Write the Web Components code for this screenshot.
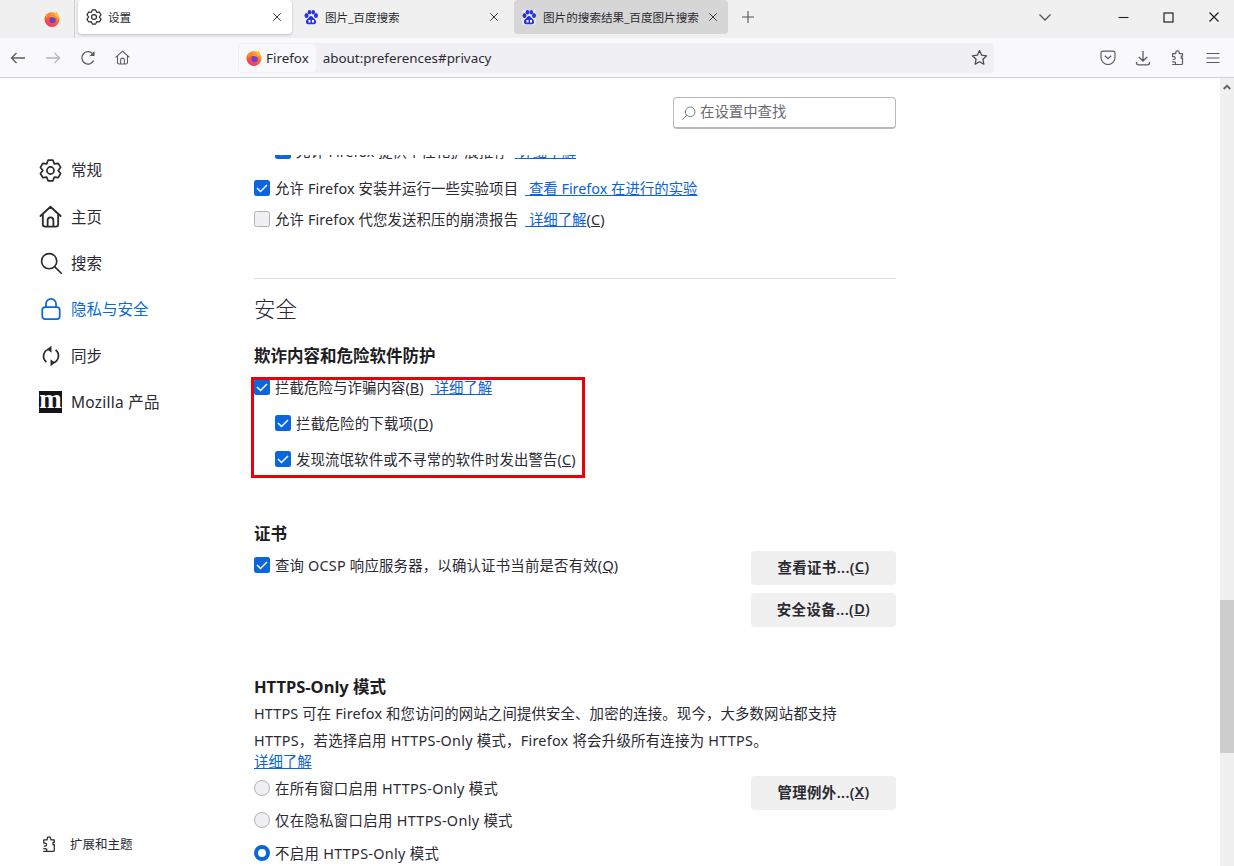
<!DOCTYPE html>
<html lang="zh-CN">
<head>
<meta charset="utf-8">
<title>设置</title>
<style>
    html, body { margin: 0; height: 100%; overflow: hidden; background: #fff; }
    body { font-family: "Noto Sans", "Noto Sans CJK SC", sans-serif; color: #2a2a2e; }
</style>
</head>
<body>
<fx-window></fx-window>
<script>
const FONT = '"Noto Sans", "Noto Sans CJK SC", sans-serif';

function gearPath(cx, cy, outer, inner) {
    let pts = [];
    for (let k = 0; k < 6; k++) {
        const a = -90 + k * 60;
        [[a - 13, outer], [a + 13, outer], [a + 30, inner]].forEach(([d, r]) => {
            const t = d * Math.PI / 180;
            pts.push((cx + r * Math.cos(t)).toFixed(2) + ' ' + (cy + r * Math.sin(t)).toFixed(2));
        });
    }
    return 'M' + pts.join('L') + 'Z';
}

const ICONS = {
    gear: (s, w) => `<svg width="${s}" height="${s}" viewBox="0 0 24 24" fill="none" stroke="currentColor" stroke-width="${w}" stroke-linejoin="round"><path d="${gearPath(12, 12, 11, 8)}"/><circle cx="12" cy="12" r="3.7"/></svg>`,
    home: (s, w) => `<svg width="${s}" height="${s}" viewBox="0 0 24 24" fill="none" stroke="currentColor" stroke-width="${w}" stroke-linejoin="round" stroke-linecap="round"><path d="M1.5 11.5 12 1.8l10.5 9.7M4 9.5V20a2.5 2.5 0 0 0 2.5 2.5h11A2.5 2.5 0 0 0 20 20V9.5M9 22.5V16a3 3 0 0 1 6 0v6.5"/></svg>`,
    search: (s, w) => `<svg width="${s}" height="${s}" viewBox="0 0 24 24" fill="none" stroke="currentColor" stroke-width="${w}" stroke-linecap="round"><circle cx="10" cy="10" r="8.3"/><path d="m16.2 16.2 7 7"/></svg>`,
    lock: (s, w) => `<svg width="${s}" height="${s}" viewBox="0 0 24 24" fill="none" stroke="currentColor" stroke-width="${w}" stroke-linejoin="round"><rect x="2.5" y="10" width="19" height="13" rx="3"/><path d="M6.5 10V6.5a5.5 5.5 0 0 1 11 0V10"/></svg>`,
    sync: (s, w) => `<svg width="${s}" height="${s}" viewBox="0 0 24 24" fill="none" stroke="currentColor" stroke-width="${w}"><path d="M9.5 4.6A8 8 0 0 0 7 18.6M14.5 19.4A8 8 0 0 0 17 5.4"/><path d="M12.5 0.8v7.6L7.6 4.6zM11.5 23.2v-7.6l4.9 3.8z" fill="currentColor" stroke="none"/></svg>`,
    puzzle: (s, w) => `<svg width="${s}" height="${s}" viewBox="0 0 16 16" fill="none" stroke="currentColor" stroke-width="${w}" stroke-linejoin="round"><path d="M2.2 14.5h9.3a1 1 0 0 0 1-1V8.2h-1.2V6.1h1.2V3.6H9.2V2.5a1.7 1.7 0 0 0-3.4 0v1.1H2.6v3h1.2a1.4 1.4 0 0 1 0 2.9H2.6M2.2 11.8h2a1.3 1.3 0 0 1 0 2.7h-2"/></svg>`,
    close: (s) => `<svg width="${s}" height="${s}" viewBox="0 0 12 12" fill="none" stroke="currentColor" stroke-width="1.2"><path d="m1.5 1.5 9 9M10.5 1.5l-9 9"/></svg>`
};

const FIREFOX = `<svg width="16" height="16" viewBox="0 0 32 32">
    <defs><linearGradient id="ff" x1="0.8" y1="0" x2="0.2" y2="1"><stop offset="0" stop-color="#ffc933"/><stop offset="0.45" stop-color="#ff6a2e"/><stop offset="1" stop-color="#ea2f6e"/></linearGradient></defs>
    <circle cx="16" cy="17" r="15" fill="url(#ff)"/>
    <path d="M24 1c3 3 6 8 6 13l-8-4z" fill="#ffbd33"/>
    <path d="M3 9c3-2 5-2 7-1l-5 7z" fill="#ff980e"/>
    <circle cx="17" cy="18" r="6.4" fill="#6d3fd0"/>
    <path d="M10 12c4-4 11-3 13 3-3-2-9-4-13-3z" fill="#ff9a2e"/>
</svg>`;

const BAIDU = `<svg width="14" height="15" viewBox="0 0 28 30" fill="#2932e1">
    <ellipse cx="5" cy="11" rx="4" ry="5"/><ellipse cx="11" cy="4.5" rx="3.6" ry="4.5"/><ellipse cx="18.5" cy="4.5" rx="3.6" ry="4.5"/><ellipse cx="24" cy="11" rx="4" ry="5"/>
    <path d="M14 12c-3 0-4 3-6 5-2.500 2-5 4-4 8 1 4 5 4 10 3.500 5 .5 9 .5 10-3.500 1-4-1.500-6-4-8-2-2-3-5-6-5z"/>
    <rect x="9" y="20" width="4" height="5" fill="#fff"/><rect x="16" y="20" width="4" height="5" fill="#fff"/>
</svg>`;

function component(name, markup) {
    const tpl = document.createElement('template');
    tpl.innerHTML = markup;
    customElements.define(name, class extends HTMLElement {
        connectedCallback() {
            if (this.shadowRoot) return;
            this.attachShadow({ mode: 'open' }).appendChild(tpl.content.cloneNode(true));
        }
    });
}

component('fx-tab', `
    <style>
        :host { display: flex; align-items: center; width: 214px; height: 34px; box-sizing: border-box; padding: 0 10px 0 8px; border-radius: 4px; font-size: 11.600px; color: #2b2a33; }
        :host([current]) { background: #fff; box-shadow: 0 1px 3px rgba(0,0,0,.22); }
        :host([loaded]) { background: #d6d6d6; }
        .icon { display: flex; margin-right: 6px; }
        .label { flex: 1; white-space: nowrap; overflow: hidden; }
        .close { display: flex; color: #3a3a40; }
    </style>
    <span class="icon"><slot name="icon"></slot></span>
    <span class="label"><slot></slot></span>
    <span class="close">${ICONS.close(10)}</span>`);

component('fx-tabstrip', `
    <style>
        :host { display: flex; align-items: flex-start; height: 38px; background: #f0f0f0; color: #3a3a40; }
        .app { display: flex; justify-content: center; align-items: center; width: 75px; height: 38px; padding-left: 29px; box-sizing: border-box; border-right: 1px solid #d0d0d0; }
        .tabs { display: flex; margin-left: 3px; }
        .gap { width: 7px; }
        .tight { width: 1px; }
        .plus { display: flex; margin: 10px 0 0 13px; color: #55555a; }
        .chev { display: flex; margin: 13px 0 0 283px; color: #55555a; }
        .win { display: flex; margin-left: auto; margin-right: -2px; }
        .win span { display: flex; justify-content: center; align-items: center; width: 45px; height: 34px; color: #222; }
    </style>
    <span class="app">${FIREFOX}</span>
    <div class="tabs">
        <fx-tab current><span slot="icon" style="display:flex">${ICONS.gear(16, 1.8)}</span>设置</fx-tab>
        <span class="tight"></span>
        <fx-tab style="padding:0 8px 0 11px"><span slot="icon" style="display:flex;margin-right:1px">${BAIDU}</span>图片_百度搜索</fx-tab>
        <span class="gap"></span>
        <fx-tab loaded><span slot="icon" style="display:flex;background:#e8e8f4;border-radius:2px;margin-right:1px">${BAIDU}</span>图片的搜索结果_百度图片搜索</fx-tab>
    </div>
    <span class="plus"><svg width="14" height="14" viewBox="0 0 14 14" stroke="currentColor" stroke-width="1.1"><path d="M7 1v12M1 7h12"/></svg></span>
    <span class="chev"><svg width="14" height="9" viewBox="0 0 14 9" fill="none" stroke="currentColor" stroke-width="1.300"><path d="m1.500 1.500 5.500 5.500 5.500-5.500"/></svg></span>
    <div class="win">
        <span><svg width="11" height="11" viewBox="0 0 11 11" stroke="currentColor" stroke-width="1.100"><path d="M0.500 5.500h10"/></svg></span>
        <span><svg width="11" height="11" viewBox="0 0 11 11" fill="none" stroke="currentColor" stroke-width="1.200"><rect x="1" y="1" width="9" height="9"/></svg></span>
        <span>${ICONS.close(12)}</span>
    </div>`);

component('fx-toolbar', `
    <style>
        :host { display: flex; align-items: center; height: 40px; box-sizing: border-box; background: #f9f9fb; border-bottom: 1px solid #cfcfd8; color: #5b5b66; font-size: 13.400px; }
        .nav { display: flex; justify-content: center; align-items: center; width: 35px; height: 30px; flex: none; }
        .nav.off { color: #b5b5bb; }
        .url { display: flex; align-items: center; height: 30px; width: 756px; margin-left: 99px; border-radius: 4px; background: #f0f0f4; color: #2b2a33; }
        .chip { display: flex; align-items: center; gap: 4px; height: 28px; padding: 0 7px; margin-left: 1px; background: #f9f9fb; border-radius: 4px; }
        .addr { flex: 1; margin-left: 7px; }
        .star { display: flex; margin-right: 6px; color: #4a4a52; }
        .right { display: flex; margin-left: 96px; }
        .right span { display: flex; justify-content: center; align-items: center; width: 35px; height: 30px; }
    </style>
    <span class="nav"><svg width="16" height="12" viewBox="0 0 16 12" fill="none" stroke="currentColor" stroke-width="1.300"><path d="M15 6H1.500M6.500 1 1.500 6l5 5"/></svg></span>
    <span class="nav off"><svg width="16" height="12" viewBox="0 0 16 12" fill="none" stroke="currentColor" stroke-width="1.300"><path d="M1 6h13.500M9.500 1l5 5-5 5"/></svg></span>
    <span class="nav"><svg width="16" height="16" viewBox="0 0 16 16" fill="none" stroke="currentColor" stroke-width="1.300"><path d="M13.700 10.500A6.200 6.200 0 1 1 12.500 3.500L14 5"/><path d="M14.500 1v5h-5z" fill="currentColor" stroke="none"/></svg></span>
    <span class="nav" style="width:34px">${ICONS.home(15, 1.700)}</span>
    <div class="url">
        <span class="chip">${FIREFOX}Firefox</span>
        <span class="addr">about:preferences#privacy</span>
        <span class="star"><svg width="17" height="17" viewBox="0 0 16 16" fill="none" stroke="currentColor" stroke-width="1.200" stroke-linejoin="round"><path d="m8 1.500 2 4.300 4.700.6-3.500 3.200.9 4.700L8 12l-4.100 2.300.9-4.700L1.300 6.400 6 5.800z"/></svg></span>
    </div>
    <div class="right">
        <span><svg width="16" height="15" viewBox="0 0 16 15" fill="none" stroke="currentColor" stroke-width="1.200"><path d="M1 3a1.800 1.800 0 0 1 1.800-1.800h10.400A1.800 1.800 0 0 1 15 3v4.500a7 7 0 0 1-14 0z"/><path d="m4.800 5.800 3.200 3 3.200-3"/></svg></span>
        <span><svg width="16" height="16" viewBox="0 0 16 16" fill="none" stroke="currentColor" stroke-width="1.300"><path d="M8 1v10M3.800 7 8 11l4.200-4M1.500 12v1a1.800 1.800 0 0 0 1.800 1.800h9.400a1.800 1.800 0 0 0 1.800-1.800v-1"/></svg></span>
        <span>${ICONS.puzzle(16, 1.200)}</span>
        <span><svg width="14" height="12" viewBox="0 0 14 12" stroke="currentColor" stroke-width="1.200"><path d="M0.500 1.500h13M0.500 6h13M0.500 10.500h13"/></svg></span>
    </div>`);

component('moz-logo', `
    <style>
        :host { display: flex; justify-content: center; width: 24px; height: 22px; box-sizing: border-box; padding-bottom: 5px; background: #15141a; color: #fff; font: 700 27px/17px "Liberation Serif", serif; }
    </style>
    <slot></slot>`);

component('nav-item', `
    <style>
        :host { display: flex; align-items: center; height: 46.400px; font-size: 15.500px; color: #2b2a33; }
        :host([current]) { color: #0a6ad8; }
        .icon { display: flex; justify-content: center; width: 23px; margin-right: 9px; }
        .label { padding-bottom: 1px; }
    </style>
    <span class="icon"><slot name="icon"></slot></span>
    <span class="label"><slot></slot></span>`);

component('pref-nav', `
    <style>
        :host { display: flex; flex-direction: column; width: 215px; box-sizing: border-box; padding: 69px 0 7px 0; margin-left: 39px; height: 788px; }
        .foot { display: flex; align-items: center; height: 30px; margin-top: auto; margin-left: 1px; font-size: 12.500px; color: #2b2a33; }
        .foot span { display: flex; justify-content: center; width: 18px; margin-right: 12px; }
        .foot b { font-weight: 400; padding-bottom: 2px; }
    </style>
    <slot></slot>
    <div class="foot"><span>${ICONS.puzzle(17, 1.200)}</span><b>扩展和主题</b></div>`);

component('pref-search', `
    <style>
        :host { display: flex; align-items: center; gap: 4px; width: 223px; height: 32px; box-sizing: border-box; margin: 19px 0 0 auto; padding-left: 8px; border: 1px solid #b9b9bd; border-bottom-width: 2px; border-radius: 4px; font-size: 14.400px; color: #6a6a70; }
        svg { transform: scaleX(-1); }
        span { padding-bottom: 4px; }
    </style>
    ${ICONS.search(14, 1.500)}<span><slot></slot></span>`);

component('pref-check', `
    <style>
        :host { display: flex; align-items: center; height: 24px; white-space: nowrap; font-size: 14.400px; color: #2b2a33; }
        :host([indent]) { margin-left: 21px; }
        .box { display: flex; flex: none; width: 16px; height: 16px; box-sizing: border-box; margin-right: 5px; border-radius: 2.500px; background: #f0f0f4; border: 1px solid #b1b1b3; }
        .text { padding-bottom: 2px; }
        svg { display: none; }
        :host([checked]) .box { background: #0a66dc; border: none; }
        :host([checked]) svg { display: block; }
    </style>
    <span class="box"><svg width="16" height="16" viewBox="0 0 16 16" fill="none" stroke="#fff" stroke-width="1.500"><path d="m3 8 3.500 3.500L13 5"/></svg></span>
    <span class="text"><slot></slot></span>`);

component('pref-radio', `
    <style>
        :host { display: flex; align-items: center; height: 24px; white-space: nowrap; font-size: 14.400px; letter-spacing: .32px; color: #2b2a33; }
        .dot { flex: none; width: 16px; height: 16px; box-sizing: border-box; margin-right: 5px; border-radius: 50%; background: #f0f0f4; border: 1px solid #b1b1b3; }
        .text { padding-bottom: 2px; }
        :host([checked]) .dot { background: #fff; border: 4px solid #0a66dc; }
    </style>
    <span class="dot"></span>
    <span class="text"><slot></slot></span>`);

component('pref-button', `
    <style>
        :host { display: flex; justify-content: center; align-items: center; width: 145px; height: 34px; box-sizing: border-box; padding-bottom: 4px; background: #f0f0f0; border-radius: 4px; font-size: 14.400px; letter-spacing: .4px; font-weight: 600; color: #2b2a33; white-space: nowrap; }
    </style>
    <slot></slot>`);

component('pref-link', `
    <style>
        :host { display: inline; color: #0b63d8; letter-spacing: 0; text-decoration: underline; }
        :host([spaced]) { margin-left: 7px; }
    </style>
    <slot></slot>`);

component('pref-heading', `
    <style>
        :host { display: block; height: 24px; line-height: 24px; font-size: 16.500px; font-weight: 700; color: #1d1c22; }
    </style>
    <slot></slot>`);

/* red annotation painted over the finished page */
component('red-frame', `
    <style>
        :host { display: block; position: relative; width: max-content; }
        .mark { position: absolute; left: -3px; top: 2px; width: 334px; height: 101px; box-sizing: border-box; border: 3px solid #e8000b; pointer-events: none; }
    </style>
    <slot></slot>
    <span class="mark"></span>`);

component('pref-scrollbar', `
    <style>
        :host { display: block; flex: none; width: 14px; height: 788px; background: #f0f0f0; overflow: hidden; }
        .up { display: flex; justify-content: center; padding-top: 6px; color: #606060; }
        .thumb { height: 153px; margin-top: 510px; background: #cdcdcd; }
    </style>
    <span class="up"><svg width="8" height="6" viewBox="0 0 8 6" fill="none" stroke="currentColor" stroke-width="1.800"><path d="m.7 5 3.300-3.300L7.300 5"/></svg></span>
    <div class="thumb"></div>`);

component('pref-pane', `
    <style>
        :host { display: flex; flex-direction: column; width: 642px; height: 788px; font-size: 14.400px; color: #2b2a33; }
        header { height: 77px; flex: none; }
        .scroll { flex: 1; overflow: hidden; margin-left: -4px; padding-left: 4px; }
        .under-header { margin-top: -16px; }
        hr { border: 0; height: 1px; margin: 47px 0 0; background: #dcdcdc; }
        h1 { margin: 14px 0 0; height: 32px; line-height: 32px; font-size: 21.500px; font-weight: 300; color: #2b2a33; }
        .split { display: flex; justify-content: space-between; }
        .col { display: flex; flex-direction: column; }
        p { margin: 1px 0 0; line-height: 27px; letter-spacing: .15px; }
        p span { letter-spacing: .26px; }
        p + pref-link { display: block; line-height: 16px; }
    </style>
    <header><pref-search>在设置中查找</pref-search></header>
    <div class="scroll">
        <pref-check checked indent class="under-header">允许 Firefox 提供个性化扩展推荐<pref-link spaced>详细了解</pref-link></pref-check>
        <pref-check checked style="margin-top:13px;letter-spacing:.12px">允许 Firefox 安装并运行一些实验项目<pref-link spaced>查看 Firefox 在进行的实验</pref-link></pref-check>
        <pref-check style="margin-top:7px;letter-spacing:.12px">允许 Firefox 代您发送积压的崩溃报告<pref-link spaced>详细了解</pref-link>(<u>C</u>)</pref-check>
        <hr>
        <h1>安全</h1>
        <pref-heading style="margin-top:19px">欺诈内容和危险软件防护</pref-heading>
        <red-frame style="margin-top:7px">
            <pref-check checked style="letter-spacing:.1px">拦截危险与诈骗内容(<u>B</u>)<pref-link spaced>详细了解</pref-link></pref-check>
            <pref-check checked indent style="margin-top:12px;letter-spacing:.27px">拦截危险的下载项(<u>D</u>)</pref-check>
            <pref-check checked indent style="margin-top:12px;letter-spacing:.14px">发现流氓软件或不寻常的软件时发出警告(<u>C</u>)</pref-check>
        </red-frame>
        <pref-heading style="margin-top:51px">证书</pref-heading>
        <div class="split" style="margin-top:5px">
            <pref-check checked style="margin-top:2px;letter-spacing:.2px">查询 OCSP 响应服务器，以确认证书当前是否有效(<u>Q</u>)</pref-check>
            <div class="col" style="gap:8px">
                <pref-button>查看证书...(<u>C</u>)</pref-button>
                <pref-button>安全设备...(<u>D</u>)</pref-button>
            </div>
        </div>
        <pref-heading style="margin-top:48px">HTTPS-Only 模式</pref-heading>
        <p>HTTPS 可在 Firefox 和您访问的网站之间提供安全、加密的连接。现今，大多数网站都支持<br><span>HTTPS，若选择启用 HTTPS-Only 模式，Firefox 将会升级所有连接为 HTTPS。</span></p>
        <pref-link>详细了解</pref-link>
        <div class="split" style="margin-top:6px">
            <div class="col" style="gap:8px">
                <pref-radio>在所有窗口启用 HTTPS-Only 模式</pref-radio>
                <pref-radio>仅在隐私窗口启用 HTTPS-Only 模式</pref-radio>
                <pref-radio checked style="margin-top:1px">不启用 HTTPS-Only 模式</pref-radio>
            </div>
            <pref-button>管理例外...(<u>X</u>)</pref-button>
        </div>
    </div>`);

component('fx-window', `
    <style>
        :host { display: flex; flex-direction: column; width: 1234px; height: 866px; overflow: hidden; font-family: ${FONT}; }
        .content { display: flex; flex: 1; background: #fff; }
        .fill { flex: 1; }
    </style>
    <fx-tabstrip></fx-tabstrip>
    <fx-toolbar></fx-toolbar>
    <div class="content">
        <pref-nav>
            <nav-item><span slot="icon" style="display:flex">${ICONS.gear(23, 1.800)}</span>常规</nav-item>
            <nav-item><span slot="icon" style="display:flex">${ICONS.home(23, 1.900)}</span>主页</nav-item>
            <nav-item><span slot="icon" style="display:flex">${ICONS.search(22, 1.800)}</span>搜索</nav-item>
            <nav-item current><span slot="icon" style="display:flex">${ICONS.lock(22, 1.900)}</span>隐私与安全</nav-item>
            <nav-item><span slot="icon" style="display:flex">${ICONS.sync(22, 1.900)}</span>同步</nav-item>
            <nav-item><moz-logo slot="icon">m</moz-logo><span style="letter-spacing:.25px">Mozilla 产品</span></nav-item>
        </pref-nav>
        <pref-pane></pref-pane>
        <span class="fill"></span>
        <pref-scrollbar></pref-scrollbar>
    </div>`);
</script>
</body>
</html>
